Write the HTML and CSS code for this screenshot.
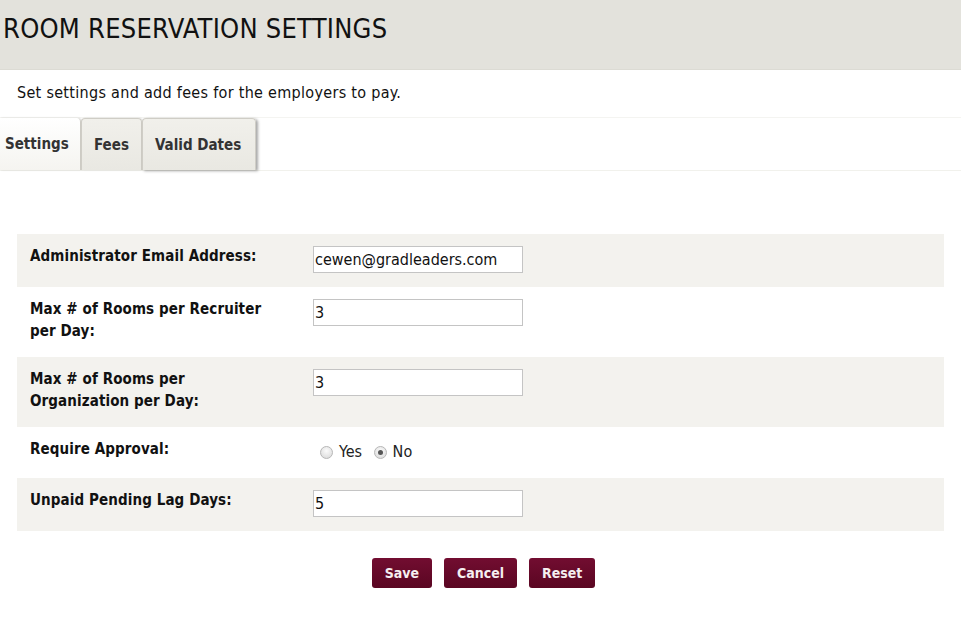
FILE: index.html
```html
<!DOCTYPE html>
<html>
<head>
<meta charset="utf-8">
<link rel="stylesheet" href="styles.css">
</head>
<body>
<header class="page-header">
  <h1 class="page-title">ROOM RESERVATION SETTINGS</h1>
</header>
<p class="intro">Set settings and add fees for the employers to pay.</p>
<nav class="tabbar">
  <div class="tab tab-active">Settings</div>
  <div class="tab">Fees</div>
  <div class="tab tab-last">Valid Dates</div>
</nav>
<main class="content">
  <table class="settings">
    <tr class="row-shaded">
      <th>Administrator Email Address:</th>
      <td><input class="field" type="text" value="cewen@gradleaders.com"></td>
    </tr>
    <tr>
      <th>Max # of Rooms per Recruiter per Day:</th>
      <td><input class="field" type="text" value="3"></td>
    </tr>
    <tr class="row-shaded">
      <th>Max # of Rooms per Organization per Day:</th>
      <td><input class="field" type="text" value="3"></td>
    </tr>
    <tr>
      <th>Require Approval:</th>
      <td class="radios">
        <label class="radio-opt"><span class="radio"></span>Yes</label>
        <label class="radio-opt"><span class="radio radio-on"></span>No</label>
      </td>
    </tr>
    <tr class="row-shaded">
      <th>Unpaid Pending Lag Days:</th>
      <td><input class="field" type="text" value="5"></td>
    </tr>
  </table>
  <div class="actions">
    <button class="btn">Save</button>
    <button class="btn">Cancel</button>
    <button class="btn">Reset</button>
  </div>
</main>
</body>
</html>
```

FILE: styles.css
```css
html, body {
  margin: 0;
  padding: 0;
  background: #ffffff;
  font-family: "DejaVu Sans Condensed", "DejaVu Sans", sans-serif;
  color: #111;
}

.page-header {
  background: #e3e2dc;
  height: 70px;
  border-bottom: 1px solid #dcdbd4;
  box-sizing: border-box;
  padding-top: 13px;
}

.page-title {
  margin: 0 0 0 3px;
  font-weight: normal;
  font-size: 27px;
  letter-spacing: 0.25px;
  line-height: 32px;
  color: #111;
}

.intro {
  margin: 14px 0 0 17px;
  font-size: 16px;
  letter-spacing: 0.3px;
  line-height: 18px;
  color: #111;
}

.tabbar {
  margin-top: 15px;
  display: flex;
  height: 52px;
  border-top: 1px solid #f4f4f1;
  border-bottom: 1px solid #f1f1ec;
}

.tab {
  display: flex;
  align-items: center;
  padding: 0 12px;
  font-weight: bold;
  font-size: 15px;
  color: #333;
  background: linear-gradient(#f1f0eb, #e9e8e2);
  border: 1px solid #cfcdc6;
  border-bottom: none;
  border-radius: 4px 4px 0 0;
  box-shadow: 1px 0 2px rgba(0,0,0,0.15);
}

.tab-active {
  background: linear-gradient(#ffffff, #f5f4f0);
  border: none;
  border-right: 1px solid #cfcdc6;
  border-radius: 0 4px 0 0;
  padding: 0 12px 0 5px;
  width: 63px;
}

.tab-last {
  box-shadow: 2px 1px 3px rgba(0,0,0,0.35);
  padding: 0 14px 0 12px;
}

.content {
  padding: 63px 17px 30px 17px;
}

.settings {
  width: 927px;
  border-collapse: collapse;
}

.settings th {
  text-align: left;
  vertical-align: top;
  width: 245px;
  padding: 11px 38px 15px 13px;
  font-size: 15px;
  letter-spacing: 0.1px;
  line-height: 22px;
  font-weight: bold;
  color: #111;
}

.settings td {
  vertical-align: top;
  padding: 12px 0 14px 0;
}

.row-shaded {
  background: #f3f2ee;
}

.field {
  display: block;
  box-sizing: border-box;
  width: 210px;
  height: 27px;
  margin: 0;
  padding: 2px 1px;
  border: 1px solid #c4c4c4;
  background: #fff;
  font-family: "DejaVu Sans Condensed", "DejaVu Sans", sans-serif;
  font-size: 16px;
  color: #111;
}

.settings td.radios {
  padding: 16px 0 17px 0;
  font-size: 16px;
  line-height: 18px;
}

.radio-opt {
  display: inline-flex;
  align-items: center;
  gap: 6px;
  margin-left: 7px;
  margin-right: 0;
  color: #222;
  line-height: 18px;
  vertical-align: top;
}

.radio {
  width: 13px;
  height: 13px;
  border-radius: 50%;
  border: 1px solid #b8b8b8;
  background: radial-gradient(circle at 50% 35%, #fbfbfb, #d6d6d6);
  box-sizing: border-box;
  position: relative;
}

.radio-on::after {
  content: "";
  position: absolute;
  left: 3px;
  top: 3px;
  width: 5px;
  height: 5px;
  border-radius: 50%;
  background: #555;
}

.actions {
  display: flex;
  justify-content: center;
  gap: 12px;
  margin-top: 27px;
  padding-left: 6px;
}

.btn {
  height: 30px;
  padding: 0 13px;
  border: none;
  border-radius: 3px;
  background: linear-gradient(#720d31, #5a0622);
  color: #f5eef0;
  font-family: "DejaVu Sans Condensed", "DejaVu Sans", sans-serif;
  font-weight: bold;
  font-size: 14px;
}
```
